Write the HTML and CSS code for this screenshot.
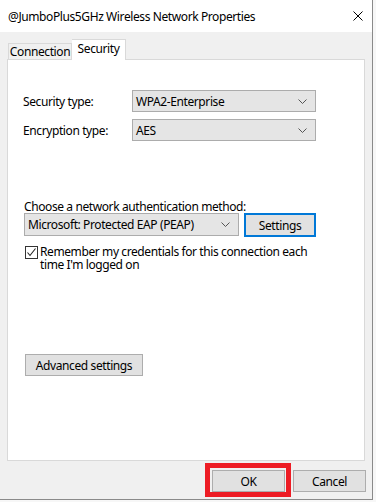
FILE: index.html
```html
<!DOCTYPE html>
<html lang="en">
<head>
  <meta charset="UTF-8">
  <title>Wireless Network Properties</title>
  <link rel="stylesheet" href="styles.css">
</head>
<body>
<div class="window">
  <div class="titlebar">
    <span class="title">@JumboPlus5GHz Wireless Network Properties</span>
    <svg class="close" width="10" height="10" viewBox="0 0 10 10">
      <path d="M0.5 0.5 L9.5 9.5 M9.5 0.5 L0.5 9.5" stroke="#000" stroke-width="1" fill="none"/>
    </svg>
  </div>

  <div class="dialog">
    <div class="tabs">
      <div class="tab">Connection</div>
      <div class="tab active">Security</div>
    </div>

    <div class="panel">
      <div class="type-grid">
        <label>Security type:</label>
        <div class="combo">
          <span>WPA2-Enterprise</span>
          <svg class="chev" width="9" height="5" viewBox="0 0 9 5"><path d="M0.5 0.5 L4.5 4.5 L8.5 0.5" stroke="#555" fill="none"/></svg>
        </div>
        <label>Encryption type:</label>
        <div class="combo">
          <span>AES</span>
          <svg class="chev" width="9" height="5" viewBox="0 0 9 5"><path d="M0.5 0.5 L4.5 4.5 L8.5 0.5" stroke="#555" fill="none"/></svg>
        </div>
      </div>

      <div class="auth">
        <label class="auth-label">Choose a network authentication method:</label>
        <div class="auth-row">
          <div class="combo wide">
            <span>Microsoft: Protected EAP (PEAP)</span>
            <svg class="chev" width="9" height="5" viewBox="0 0 9 5"><path d="M0.5 0.5 L4.5 4.5 L8.5 0.5" stroke="#555" fill="none"/></svg>
          </div>
          <button class="btn default">Settings</button>
        </div>
        <div class="check-row">
          <span class="checkbox">
            <svg width="11" height="11" viewBox="0 0 11 11"><path d="M1.5 5.5 L4 8.5 L9.5 1.5" stroke="#222" stroke-width="1.1" fill="none"/></svg>
          </span>
          <span class="check-text">Remember my credentials for this connection each time I'm logged on</span>
        </div>
      </div>

      <button class="btn advanced">Advanced settings</button>
    </div>

    <div class="footer">
      <span class="highlight"><button class="btn ok">OK</button></span>
      <button class="btn cancel">Cancel</button>
    </div>
  </div>
</div>
</body>
</html>
```

FILE: styles.css
```css
* {
  box-sizing: border-box;
}
body {
  margin: 0;
  background: #f7f7f7;
  font-family: "Segoe UI", "Noto Sans", "DejaVu Sans", sans-serif;
  font-size: 12px;
  letter-spacing: -0.4px;
  color: #000;
}
.window {
  width: 373px;
  height: 500px;
  border-right: 1px solid #8a8a8a;
  border-bottom: 1px solid #8a8a8a;
  background: #f0f0f0;
  display: flex;
  flex-direction: column;
}
.titlebar {
  flex: none;
  height: 32px;
  background: #fff;
  display: flex;
  align-items: center;
  justify-content: space-between;
  padding: 0 9px 0 8px;
}
.close {
  display: block;
}

/* Tabs + panel */
.dialog {
  flex: 1;
  padding: 7px 6px 0 7px;
  display: flex;
  flex-direction: column;
}
.tabs {
  flex: none;
  display: flex;
  align-items: flex-end;
  padding-left: 1px;
  height: 20px;
  position: relative;
  z-index: 1;
}
.tab {
  border: 1px solid #d9d9d9;
  border-bottom: none;
  background: #f0f0f0;
  width: 64px;
  height: 16px;
  line-height: 16px;
  text-align: center;
}
.tab.active {
  background: #fff;
  width: 54px;
  height: 21px;
  line-height: 18px;
  border-left: none;
  margin-bottom: -1px;
}
.panel {
  flex: none;
  background: #fff;
  border: 1px solid #d9d9d9;
  width: 358px;
  height: 402px;
  padding: 30px 0 0 15px;
}
.type-grid {
  display: grid;
  grid-template-columns: 109px 184px;
  row-gap: 7px;
  align-items: center;
}
.combo {
  height: 22px;
  background: #e5e5e5;
  border: 1px solid #acacac;
  display: flex;
  align-items: center;
  justify-content: space-between;
  padding: 0 8px 0 3px;
}
.chev {
  display: block;
}
.auth {
  margin-top: 59px;
}
.auth-label {
  display: block;
  padding-left: 1px;
  line-height: 13px;
}
.auth-row {
  display: flex;
  align-items: flex-start;
  gap: 5px;
  padding-left: 1px;
}
.combo.wide {
  width: 215px;
  height: 23px;
}
.btn {
  font-family: inherit;
  font-size: 12px;
  letter-spacing: inherit;
  color: #000;
  background: #e1e1e1;
  border: 1px solid #adadad;
  height: 22px;
  padding: 0;
  margin: 0;
}
.btn.default {
  width: 72px;
  height: 24px;
  border: 2px solid #0078d7;
}
.check-row {
  display: flex;
  align-items: flex-start;
  margin-top: 9px;
  padding-left: 2px;
}
.checkbox {
  width: 13px;
  height: 13px;
  border: 1px solid #333;
  background: #fff;
  flex: none;
}
.checkbox svg {
  display: block;
}
.check-text {
  margin: -1px 0 0 2px;
  line-height: 13px;
  width: 270px;
}
.advanced {
  display: block;
  width: 118px;
  margin: 83px 0 0 2px;
}

/* Footer */
.footer {
  display: flex;
  justify-content: flex-end;
  align-items: flex-start;
  gap: 2px;
  padding: 2px 0 0 0;
}
.highlight {
  display: block;
  border: 5px solid #ed1c24;
  padding: 2px 1px 0 2px;
}
.btn.ok {
  display: block;
  width: 73px;
}
.btn.cancel {
  width: 73px;
  margin-top: 7px;
}
```
